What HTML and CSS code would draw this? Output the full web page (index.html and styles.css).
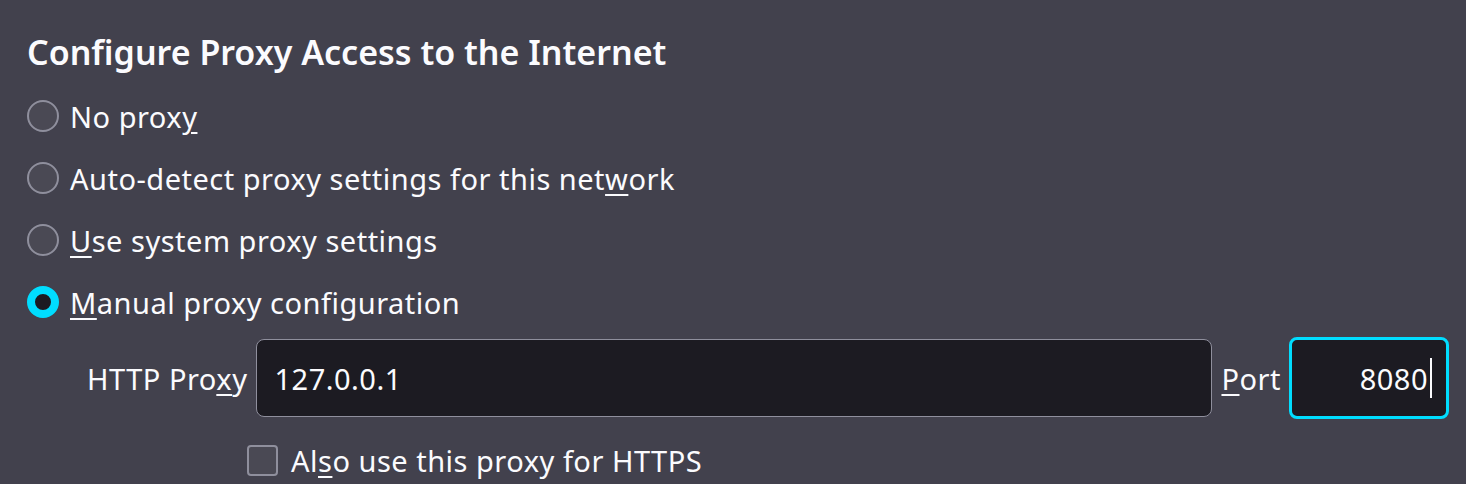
FILE: index.html
```html
<!DOCTYPE html>
<html>
<head>
<meta charset="utf-8">
<link rel="stylesheet" href="styles.css">
</head>
<body>
<div class="page">
  <h1 class="title">Configure Proxy Access to the Internet</h1>
  <div class="options">
    <label class="option"><span class="radio"></span><span>No prox<u>y</u></span></label>
    <label class="option"><span class="radio"></span><span>Auto-detect proxy settings for this net<u>w</u>ork</span></label>
    <label class="option"><span class="radio"></span><span><u>U</u>se system proxy settings</span></label>
    <label class="option"><span class="radio checked"></span><span><u>M</u>anual proxy configuration</span></label>
  </div>
  <div class="manual">
    <div class="proxy-row">
      <span class="label">HTTP Pro<u>x</u>y</span>
      <div class="field host">127.0.0.1</div>
      <span class="label"><u>P</u>ort</span>
      <div class="field port focused">8080<span class="caret"></span></div>
    </div>
    <label class="check-row"><span class="checkbox"></span><span>Al<u>s</u>o use this proxy for HTTPS</span></label>
  </div>
</div>
</body>
</html>
```

FILE: styles.css
```css
html, body {
  margin: 0;
  padding: 0;
  background: #42414d;
  height: 100%;
  overflow: hidden;
}
body {
  font-family: "Noto Sans", "Open Sans", sans-serif;
  color: #fbfbfe;
}
u {
  text-decoration-thickness: 2px;
  text-underline-offset: 4px;
}
.page {
  padding: 27px 17px 0 27px;
}
.title {
  margin: 0;
  font-size: 34px;
  font-weight: 600;
  line-height: 50px;
  letter-spacing: 0;
}
.options {
  display: flex;
  flex-direction: column;
  margin-top: 8px;
}
.option {
  display: flex;
  align-items: center;
  gap: 11px;
  height: 62px;
  font-size: 29px;
  letter-spacing: 0.5px;
}
.radio {
  box-sizing: border-box;
  width: 32px;
  height: 32px;
  border-radius: 50%;
  border: 2px solid #8f8f9d;
  background: #4a4954;
  flex: none;
}
.radio.checked {
  border: 8px solid #00ddff;
  background: #1c1b22;
}
.manual {
  padding-left: 60px;
}
.proxy-row {
  display: flex;
  align-items: center;
  height: 82px;
  margin-top: 4px;
  font-size: 29px;
  letter-spacing: 0.5px;
}
.label {
  flex: none;
}
.field {
  box-sizing: border-box;
  height: 78px;
  background: #1c1b22;
  border: 1px solid #8f8f9d;
  border-radius: 8px;
  display: flex;
  align-items: center;
}
.host {
  flex: 1;
  margin: 0 9px 0 9px;
  padding-left: 17px;
}
.port {
  width: 160px;
  height: 82px;
  margin-left: 8px;
  justify-content: flex-end;
  padding-right: 14px;
}
.port.focused {
  border: 3px solid #00ddff;
}
.caret {
  display: inline-block;
  width: 2px;
  height: 40px;
  background: #fbfbfe;
  margin-left: 2px;
}
.check-row {
  display: flex;
  align-items: center;
  gap: 13px;
  margin-left: 160px;
  margin-top: 22px;
  font-size: 29px;
  letter-spacing: 0.5px;
}
.checkbox {
  box-sizing: border-box;
  width: 31px;
  height: 31px;
  border: 2px solid #8f8f9d;
  border-radius: 4px;
  background: #4a4954;
  flex: none;
}
```
